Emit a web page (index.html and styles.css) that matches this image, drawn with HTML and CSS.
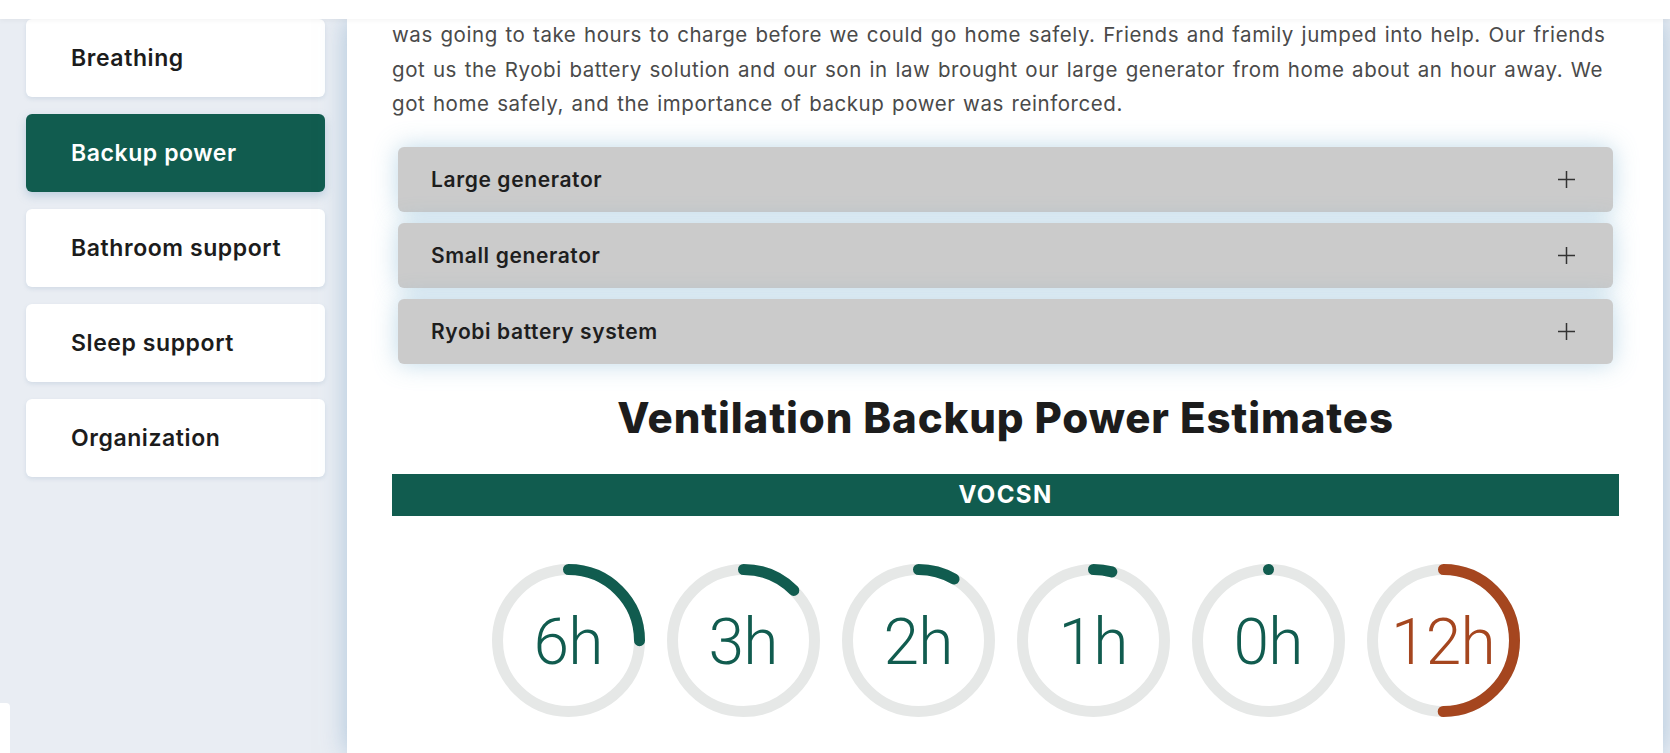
FILE: index.html
```html
<!DOCTYPE html>
<html lang="en">
<head>
<meta charset="utf-8">
<title>Backup power</title>
<link rel="stylesheet" href="styles.css">
</head>
<body>
<header class="topbar"></header>
<div class="layout">
  <aside class="sidebar">
    <a class="nav-card">Breathing</a>
    <a class="nav-card active">Backup power</a>
    <a class="nav-card">Bathroom support</a>
    <a class="nav-card">Sleep support</a>
    <a class="nav-card">Organization</a>
    <div class="side-tab"></div>
  </aside>
  <main class="main">
    <p class="story">was going to take hours to charge before we could go home safely. Friends and family jumped into help. Our friends got us the Ryobi battery solution and our son in law brought our large generator from home about an hour away. We got home safely, and the importance of backup power was reinforced.</p>
    <div class="accordion">
      <div class="acc-item"><span>Large generator</span><svg class="plus" viewBox="0 0 17 17"><path d="M8.5 0V17M0 8.5H17"/></svg></div>
      <div class="acc-item"><span>Small generator</span><svg class="plus" viewBox="0 0 17 17"><path d="M8.5 0V17M0 8.5H17"/></svg></div>
      <div class="acc-item"><span>Ryobi battery system</span><svg class="plus" viewBox="0 0 17 17"><path d="M8.5 0V17M0 8.5H17"/></svg></div>
    </div>
    <h2 class="estimates-title">Ventilation Backup Power Estimates</h2>
    <div class="device-bar">VOCSN</div>
    <div class="gauges">
      <div class="gauge">
        <svg viewBox="0 0 153 153"><circle class="track" cx="76.5" cy="76.5" r="71"/><circle class="arc" cx="76.5" cy="76.5" r="71" stroke-dasharray="111.5 446.1"/></svg>
        <span class="gauge-label">6h</span>
      </div>
      <div class="gauge">
        <svg viewBox="0 0 153 153"><circle class="track" cx="76.5" cy="76.5" r="71"/><circle class="arc" cx="76.5" cy="76.5" r="71" stroke-dasharray="55.8 446.1"/></svg>
        <span class="gauge-label">3h</span>
      </div>
      <div class="gauge">
        <svg viewBox="0 0 153 153"><circle class="track" cx="76.5" cy="76.5" r="71"/><circle class="arc" cx="76.5" cy="76.5" r="71" stroke-dasharray="37.2 446.1"/></svg>
        <span class="gauge-label">2h</span>
      </div>
      <div class="gauge">
        <svg viewBox="0 0 153 153"><circle class="track" cx="76.5" cy="76.5" r="71"/><circle class="arc" cx="76.5" cy="76.5" r="71" stroke-dasharray="18.6 446.1"/></svg>
        <span class="gauge-label">1h</span>
      </div>
      <div class="gauge">
        <svg viewBox="0 0 153 153"><circle class="track" cx="76.5" cy="76.5" r="71"/><circle class="arc" cx="76.5" cy="76.5" r="71" stroke-dasharray="0.01 446.1"/></svg>
        <span class="gauge-label">0h</span>
      </div>
      <div class="gauge warn">
        <svg viewBox="0 0 153 153"><circle class="track" cx="76.5" cy="76.5" r="71"/><circle class="arc" cx="76.5" cy="76.5" r="71" stroke-dasharray="223 446.1"/></svg>
        <span class="gauge-label">12h</span>
      </div>
    </div>
  </main>
</div>
</body>
</html>
```
FILE: styles.css
```css
* { box-sizing: border-box; }
html, body { margin: 0; height: 100%; }
body {
  background: #e9edf3;
  font-family: "Inter", "Open Sans", sans-serif;
  overflow: hidden;
}
.topbar {
  height: 19px;
  background: #fff;
  position: relative;
  z-index: 5;
  box-shadow: 0 2px 5px rgba(0, 0, 0, 0.04);
}
.layout {
  display: flex;
  height: 734px;
}
.sidebar {
  width: 347px;
  flex: none;
  padding: 0 22px 0 26px;
  display: flex;
  flex-direction: column;
  gap: 17px;
}
.nav-card {
  height: 78px;
  flex: none;
  display: flex;
  align-items: center;
  padding-left: 45px;
  background: #fff;
  border-radius: 6px;
  font-size: 23px;
  letter-spacing: 0.58px;
  font-weight: 600;
  color: #1c1c1c;
  box-shadow: 0 2px 4px rgba(120, 150, 180, 0.2);
}
.nav-card.active {
  background: #115c4f;
  color: #fff;
  box-shadow: 0 4px 10px rgba(110, 150, 185, 0.35);
}
.side-tab {
  position: absolute;
  left: 0;
  bottom: 0;
  width: 10px;
  height: 50px;
  background: #fff;
  border-top-right-radius: 4px;
}
.main {
  width: 1316px;
  flex: none;
  background: #fff;
  padding: 0 44px 0 45px;
  box-shadow: 0 0 24px rgba(130, 168, 202, 0.6);
  position: relative;
}
.story {
  margin: -1px 0 0;
  font-size: 20.5px;
  letter-spacing: 0.56px;
  word-spacing: 1.35px;
  line-height: 34.5px;
  color: #4a4a4a;
}
.accordion {
  margin: 25px 6px 0;
  display: flex;
  flex-direction: column;
  gap: 11px;
}
.acc-item {
  height: 65px;
  background: #cbcbcb;
  border-radius: 6px;
  display: flex;
  align-items: center;
  justify-content: space-between;
  padding: 0 38px 0 33px;
  font-size: 21px;
  letter-spacing: 0.62px;
  font-weight: 600;
  color: #1e1e1e;
  box-shadow: 0 0 24px rgba(110, 170, 205, 0.45);
}
.plus {
  width: 17px;
  height: 17px;
  stroke: #333;
  stroke-width: 1.5;
  fill: none;
}
.estimates-title {
  margin: 30px 0 0;
  text-align: center;
  font-size: 42px;
  letter-spacing: 0.86px;
  line-height: 48px;
  font-weight: 800;
  color: #1c1c1c;
}
.device-bar {
  margin-top: 32px;
  height: 42px;
  background: #115c4f;
  color: #fff;
  font-size: 24px;
  letter-spacing: 1.4px;
  font-weight: 700;
  display: flex;
  align-items: center;
  justify-content: center;
}
.gauges {
  margin-top: 48px;
  display: flex;
  justify-content: center;
  gap: 22px;
}
.gauge {
  width: 153px;
  height: 153px;
  position: relative;
  display: flex;
  align-items: center;
  justify-content: center;
  color: #115c4f;
}
.gauge svg {
  position: absolute;
  inset: 0;
  width: 153px;
  height: 153px;
  transform: rotate(-90deg);
}
.track {
  fill: none;
  stroke: #e6e8e7;
  stroke-width: 11;
}
.arc {
  fill: none;
  stroke: #115c4f;
  stroke-width: 11;
  stroke-linecap: round;
}
.gauge.warn { color: #a5461f; }
.gauge.warn .arc { stroke: #a5461f; }
.gauge-label {
  position: relative;
  font-family: "Roboto", sans-serif;
  font-weight: 300;
  font-size: 64px;
  letter-spacing: -0.8px;
  padding-top: 6px;
  line-height: 1;
}
```
